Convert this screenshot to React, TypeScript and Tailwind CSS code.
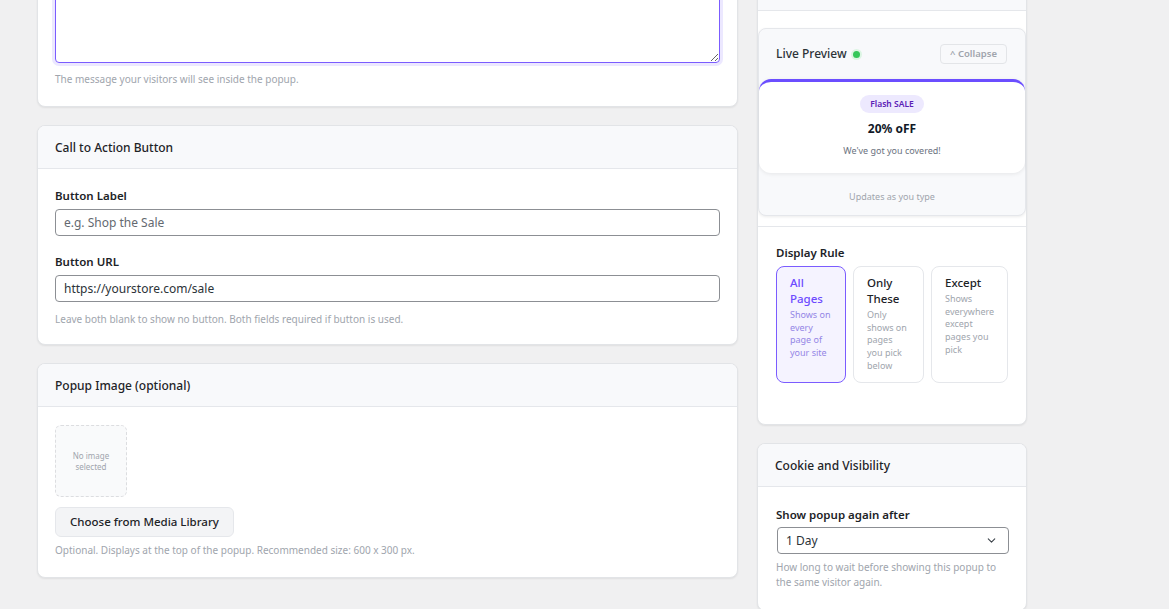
import { ChevronDown } from "lucide-react"

const font = { fontFamily: '"Noto Sans", "Liberation Sans", Arial, sans-serif' }

function Card({ title, children, className = "" }: { title?: string; children: React.ReactNode; className?: string }) {
    return (
        <div className={`bg-white border border-[#e2e4e7] rounded-lg shadow-[0_1px_2px_rgba(0,0,0,0.07)] overflow-hidden ${className}`}>
            {title && (
                <div className="h-[43px] flex items-center px-[17px] pt-[2px] bg-[#f8f9fb] border-b border-[#e5e7eb]">
                    <h3 className="text-[12px] font-medium text-[#1d2327]">{title}</h3>
                </div>
            )}
            {children}
        </div>
    )
}

function Label({ children }: { children: React.ReactNode }) {
    return <label className="block text-[11.5px] leading-4 font-semibold text-[#1d2327]">{children}</label>
}

function Help({ children, className = "" }: { children: React.ReactNode; className?: string }) {
    return <p className={`text-[10px] leading-4 text-[#a0a5ad] ${className}`}>{children}</p>
}

const rules = [
    { title: "All Pages", desc: "Shows on every page of your site", active: true, w: "w-[70px]" },
    { title: "Only These", desc: "Only shows on pages you pick below", active: false, w: "w-[71px]" },
    { title: "Except", desc: "Shows everywhere except pages you pick", active: false, w: "w-[77px]" },
]

export default function App() {
    return (
        <div className="min-h-screen bg-[#f0f0f1] overflow-hidden" style={font}>
            <div className="flex items-start gap-[19px] pl-[37px] -mt-[33px]">
                {/* left column */}
                <div className="w-[701px] flex flex-col gap-[18px]">
                    <Card>
                        <div className="px-[17px] pt-[18px] pb-[19px]">
                            <textarea
                                className="block w-[665px] h-[77px] rounded-[4px] border border-[#7b5cff] ring-[3px] ring-[#ece8ff] outline-none"
                                defaultValue=""
                            />
                            <Help className="mt-[8px]">The message your visitors will see inside the popup.</Help>
                        </div>
                    </Card>

                    <Card title="Call to Action Button">
                        <div className="px-[17px] pt-[19px] pb-[17px]">
                            <Label>Button Label</Label>
                            <input
                                placeholder="e.g. Shop the Sale"
                                className="mt-[5px] block w-[665px] h-[27px] px-[8px] rounded-[4px] border border-[#8c8f94] text-[12px] text-[#2c3338] placeholder:text-[#646970] outline-none"
                            />
                            <div className="mt-[18px]">
                                <Label>Button URL</Label>
                            </div>
                            <input
                                defaultValue="https://yourstore.com/sale"
                                className="mt-[5px] block w-[665px] h-[27px] px-[8px] rounded-[4px] border border-[#8c8f94] text-[12px] text-[#2c3338] outline-none"
                            />
                            <Help className="mt-[9px]">Leave both blank to show no button. Both fields required if button is used.</Help>
                        </div>
                    </Card>

                    <Card title="Popup Image (optional)">
                        <div className="px-[17px] pt-[18px] pb-[19px]">
                            <div className="w-[72px] h-[72px] rounded-md border border-dashed border-[#dcdde0] bg-[#f9fafb] flex items-center justify-center text-center text-[8px] leading-[11px] text-[#a0a5ad]">
                                No image<br />selected
                            </div>
                            <button className="mt-[10px] h-[30px] px-[14px] rounded-md bg-[#f3f4f6] border border-[#e5e7eb] text-[11.5px] font-medium text-[#1d2327]">
                                Choose from Media Library
                            </button>
                            <Help className="mt-[5px]">Optional. Displays at the top of the popup. Recommended size: 600 x 300 px.</Help>
                        </div>
                    </Card>
                </div>

                {/* right column */}
                <div className="w-[270px] flex flex-col gap-[18px]">
                    <Card title=" ">
                        <div className="pt-[17px]">
                            <div className="border border-[#e5e7eb] rounded-lg bg-[#f8f9fb] shadow-[0_1px_3px_rgba(0,0,0,0.08)]">
                                <div className="h-[50px] flex items-center justify-between pl-[17px] pr-[18px]">
                                    <div className="flex items-center gap-[6px]">
                                        <span className="text-[12px] font-medium text-[#2c3338]">Live Preview</span>
                                        <span className="w-[7px] h-[7px] rounded-full bg-[#34c759] ring-2 ring-[#dcf5e3]" />
                                    </div>
                                    <button className="h-[20px] px-[9px] rounded-[4px] border border-[#e3e5e8] text-[9.5px] font-semibold text-[#a0a5ad]">
                                        ^ Collapse
                                    </button>
                                </div>
                                <div className="bg-white rounded-xl border-t-[3px] border-[#6b4eff] shadow-[0_1px_4px_rgba(0,0,0,0.08)] h-[94px] flex flex-col items-center pt-[13px]">
                                    <span className="h-[18px] px-[10px] rounded-full bg-[#ede9fe] text-[8.5px] font-semibold text-[#5b21b6] flex items-center">
                                        Flash SALE
                                    </span>
                                    <div className="mt-[7px] text-[12px] leading-[18px] font-bold text-[#111827]">20% oFF</div>
                                    <div className="mt-[6px] text-[9px] leading-[14px] text-[#6b7280]">We've got you covered!</div>
                                </div>
                                <div className="h-[42px] pt-[5px] flex items-center justify-center text-[9px] text-[#a0a5ad]">
                                    Updates as you type
                                </div>
                            </div>
                        </div>
                        <div className="mt-[10px] border-t border-[#e5e7eb] px-[18px] pt-[18px] pb-[41px]">
                            <Label>Display Rule</Label>
                            <div className="mt-[5px] flex gap-[7px]">
                                {rules.map(r => (
                                    <div
                                        key={r.title}
                                        className={`${r.w} h-[117px] rounded-lg border px-[13px] pt-[8px] ${r.active ? "border-[#7b5cff] bg-[#f5f3ff]" : "border-[#e5e7eb] bg-white"}`}
                                    >
                                        <div className={`text-[11.5px] leading-4 font-medium ${r.active ? "text-[#6d4aff]" : "text-[#1d2327]"}`}>{r.title}</div>
                                        <div className={`mt-[2px] text-[9px] leading-[12.7px] ${r.active ? "text-[#9486e6]" : "text-[#a0a5ad]"}`}>{r.desc}</div>
                                    </div>
                                ))}
                            </div>
                        </div>
                    </Card>

                    <Card title="Cookie and Visibility">
                        <div className="px-[18px] pt-[20px] pb-[20px]">
                            <Label>Show popup again after</Label>
                            <div className="relative mt-[4px] ml-px">
                                <select className="block w-[232px] h-[27px] pl-[8px] pr-[28px] rounded-[4px] border border-[#8c8f94] bg-white text-[12px] text-[#2c3338] appearance-none outline-none">
                                    <option>1 Day</option>
                                    <option>3 Days</option>
                                    <option>1 Week</option>
                                </select>
                                <ChevronDown className="absolute right-[10px] top-[7px] w-[13px] h-[13px] text-[#3c434a] pointer-events-none" strokeWidth={2} />
                            </div>
                            <Help className="mt-[6px] leading-[15px]">How long to wait before showing this popup to the same visitor again.</Help>
                        </div>
                    </Card>
                </div>
            </div>
        </div>
    )
}
